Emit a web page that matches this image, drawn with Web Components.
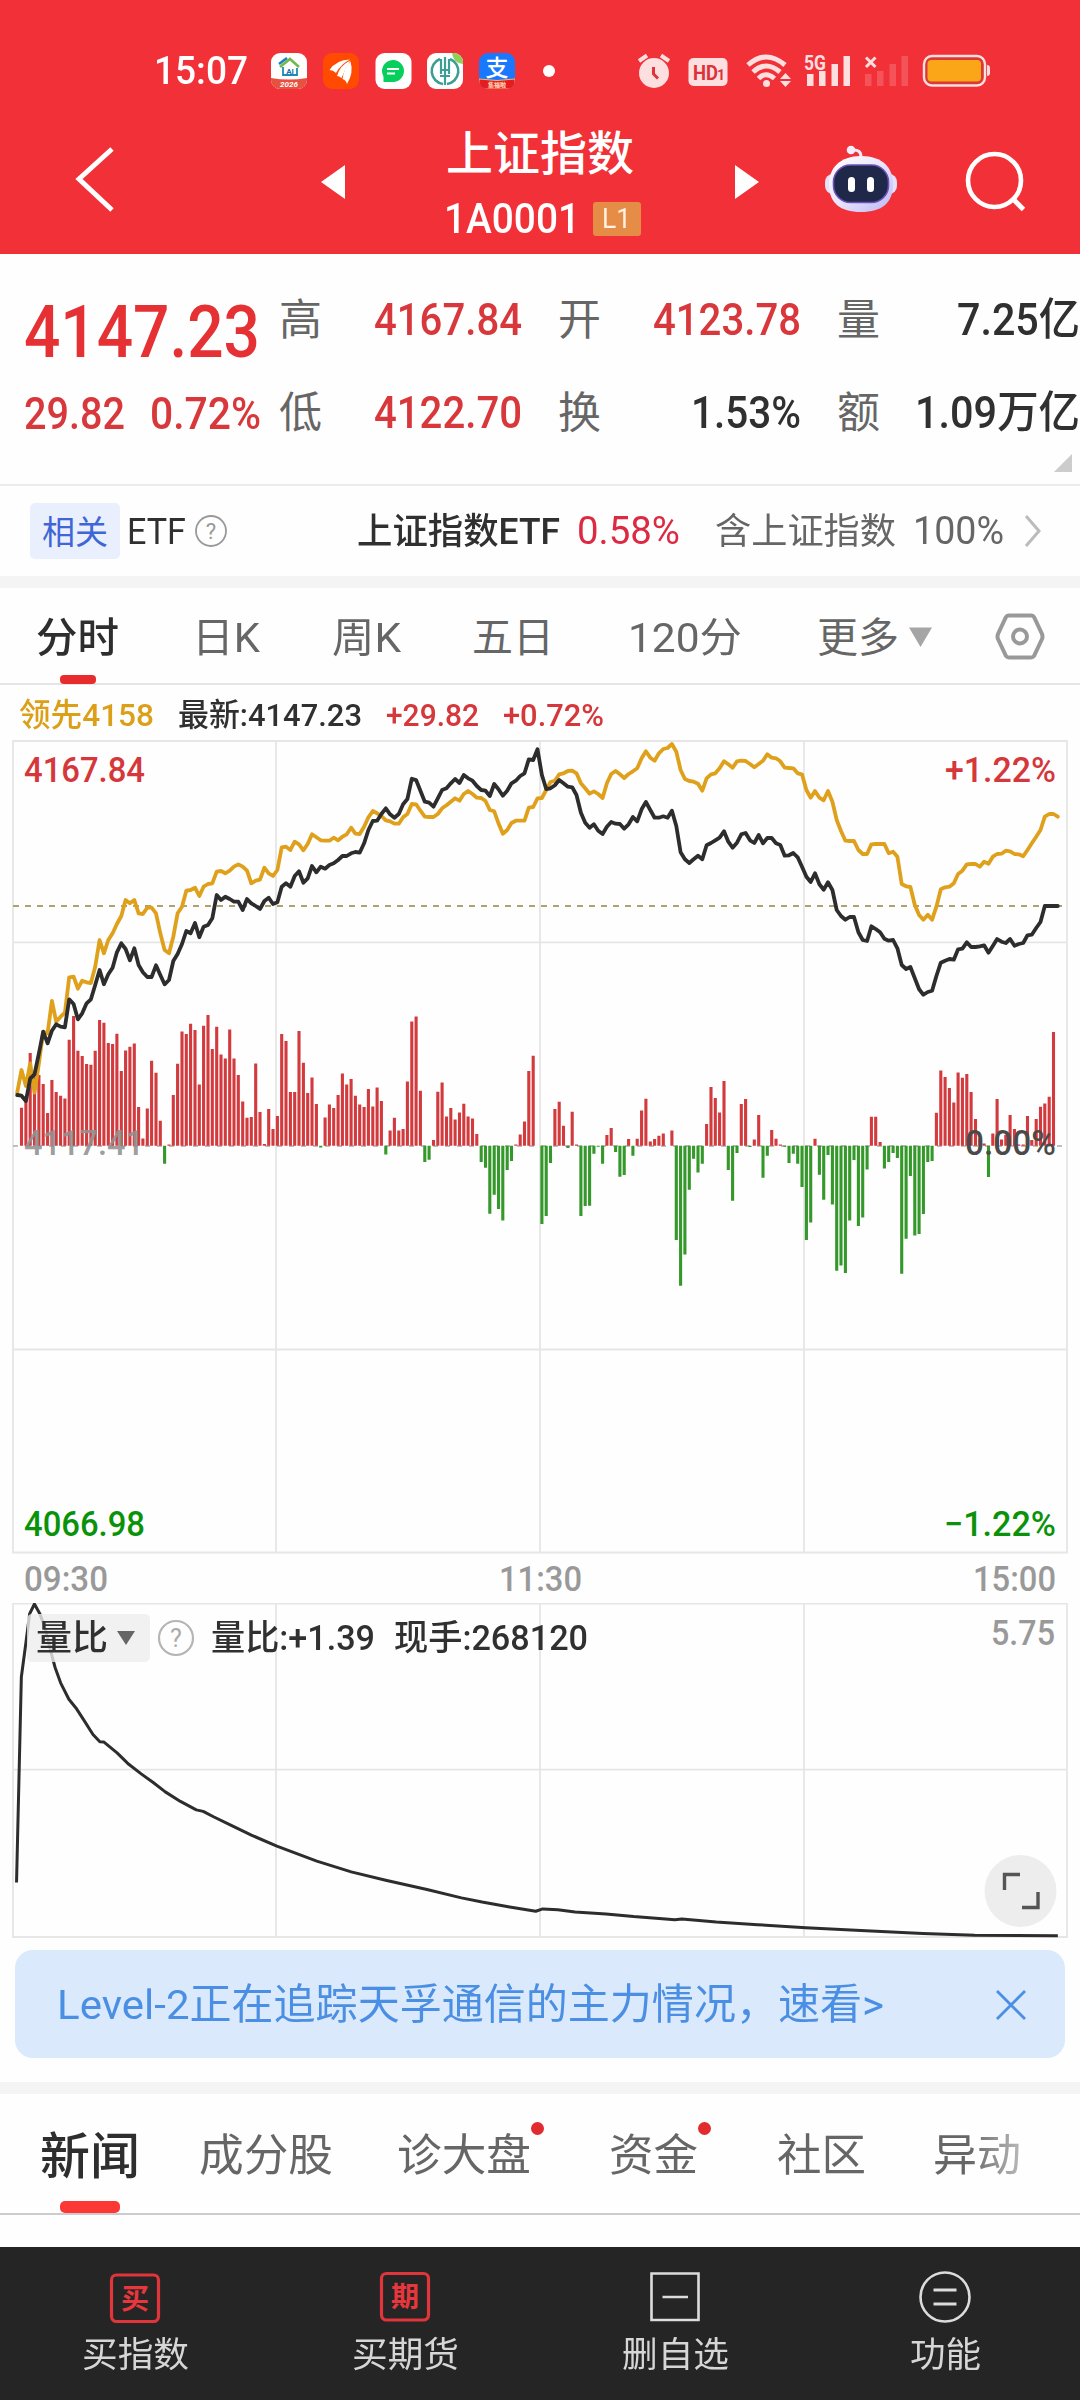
<!DOCTYPE html>
<html lang="zh-CN">
<head>
<meta charset="utf-8">
<title>上证指数</title>
<style>
  body {
    margin: 0;
    width: 1080px;
    height: 2400px;
    overflow: hidden;
    background: #fefefe;
    font-family: Roboto, "Noto Sans CJK SC", sans-serif;
  }
</style>
</head>
<body>
<stock-app></stock-app>

<script>
/* One line of text squeezed to a given width */
class FitText extends HTMLElement {
  constructor() {
    super();
    this.attachShadow({ mode: "open" });
  }

  static get styles() {
    return `
      :host {
        display: block;
        flex: none;
        line-height: 1;
        white-space: nowrap;
      }

      span {
        display: inline-block;
        vertical-align: top;
        transform-origin: 0 0;
      }
    `;
  }

  connectedCallback() {
    this.shadowRoot.innerHTML = `
    <style>${FitText.styles}</style>
    <span><slot></slot></span>
    `;
    const width = Number(this.getAttribute("w"));
    const span = this.shadowRoot.querySelector("span");
    this.style.height = "1em";
    span.style.transform = `scaleX(${width / span.getBoundingClientRect().width})`;
    this.style.width = `${width}px`;
  }
}

customElements.define("fit-text", FitText);

class StatusBar extends HTMLElement {
  constructor() {
    super();
    this.attachShadow({ mode: "open" });
  }

  static get styles() {
    return `
      :host {
        display: flex;
        height: 110px;
        box-sizing: border-box;
        padding: 40px 0 0 154px;
        color: #fff;
      }

      fit-text {
        margin: 12px 12px 0 0;
        font-size: 38px;
        font-weight: 500;
      }

      .apps {
        margin-right: 60px;
      }
    `;
  }

  connectedCallback() {
    this.shadowRoot.innerHTML = `
    <style>${StatusBar.styles}</style>
    <fit-text w="94">15:07</fit-text>
    <svg class="apps" width="300" height="60" viewBox="260 40 300 60">
      <defs>
        <clipPath id="a"><rect x="271" y="53" width="36" height="36" rx="9"/></clipPath>
        <clipPath id="b"><rect x="479" y="53" width="36" height="36" rx="9"/></clipPath>
        <clipPath id="c"><rect x="427" y="53" width="36" height="36" rx="9"/></clipPath>
      </defs>
      <g clip-path="url(#a)">
        <rect x="271" y="53" width="36" height="36" fill="#fff"/>
        <path d="M271 78 Q289 81 307 78 V89 H271Z" fill="#e8503f"/>
        <path d="M280 67 L290 59 L299 67" fill="none" stroke="#72b94a" stroke-width="2.5"/>
        <path d="M279 64 L287 58" fill="none" stroke="#1d7fb8" stroke-width="2.5"/>
        <path d="M283 67 V75 H297 V68" fill="none" stroke="#1d8ab0" stroke-width="1.8"/>
        <text x="290" y="73.500" text-anchor="middle" font-size="8" font-weight="700" fill="#1d6fb0">AI</text>
        <text x="289" y="87" text-anchor="middle" font-size="8" font-style="italic" font-weight="700" fill="#fff">2026</text>
      </g>
      <rect x="323" y="53" width="36" height="36" rx="9" fill="#ff4a00"/>
      <g fill="#fff">
        <path d="M329.500 70 Q336 60 350 59.500 Q341 64 336 73 Q333 70 329.500 70Z"/>
        <path d="M337 76 Q340 65 350.500 60.500 Q345 69 341.500 78 Q339 76 337 76Z"/>
        <path d="M342.500 79 Q344 68 350.500 61.500 Q354 73 347 84 Q346 80 342.500 79Z"/>
      </g>
      <rect x="375.500" y="53" width="36" height="36" rx="9" fill="#fff"/>
      <path d="M383.500 82 V76.500 A11 11 0 1 1 393 82Z" fill="#06cf5c"/>
      <path d="M387 69 H399 M387 73.500 H395" stroke="#fff" stroke-width="2"/>
      <g clip-path="url(#c)">
        <rect x="427" y="53" width="36" height="36" fill="#fff"/>
        <path d="M452 53 H463 V64 Q453 63 452 53Z" fill="#8ed05b"/>
        <path d="M440 59 A13 13 0 0 0 443 84 M450 59 A13 13 0 0 1 447 84" fill="none" stroke="#3c9f93" stroke-width="2.600"/>
        <path d="M445 57 V85 M441 59 V74 M449 59 V74 M440 70 H450 M440 76 H450" stroke="#3c9f93" stroke-width="2.200"/>
      </g>
      <g clip-path="url(#b)">
        <rect x="479" y="53" width="36" height="36" fill="#1a78ff"/>
        <text x="497" y="76" text-anchor="middle" font-size="23" font-weight="500" fill="#fff">支</text>
        <path d="M479 79 Q497 82 515 79 V89 H479Z" fill="#e81c1c" stroke="#ffb46b"/>
        <text x="497" y="87" text-anchor="middle" font-size="6" font-weight="700" fill="#ffe3c8">集福啦</text>
      </g>
      <circle cx="549" cy="71" r="6" fill="#fff"/>
    </svg>
    <svg width="400" height="60" viewBox="620 40 400 60" fill="#fddfe0">
      <circle cx="654" cy="73" r="15"/>
      <path d="M639 61 L647 55.500 M661 55.500 L669 61" stroke="#fddfe0" stroke-width="4"/>
      <path d="M653.500 67 V74 L658 78.500" fill="none" stroke="#e0333a" stroke-width="3"/>
      <rect x="688.500" y="58" width="39" height="28" rx="5"/>
      <text x="693" y="80" font-size="21" font-weight="700" fill="#dc333a" textLength="25" lengthAdjust="spacingAndGlyphs">HD</text>
      <text x="717" y="80" font-size="14" font-weight="700" fill="#dc333a">1</text>
      <g fill="none" stroke="#fddfe0" stroke-width="5">
        <path d="M748 65 Q766 49 785 65"/>
        <path d="M753 72 Q766 60 780 72"/>
        <path d="M758.500 78.500 Q766 71 774.500 78.500"/>
      </g>
      <circle cx="766.500" cy="83.500" r="3.500"/>
      <path d="M785.500 73 L791 79 H780Z M785.500 87 L791 81 H780Z"/>
      <text x="804" y="69.500" font-size="20.500" font-weight="700" textLength="22" lengthAdjust="spacingAndGlyphs">5G</text>
      <path d="M807 74 h6.500 v12 h-6.500z M819 71 h6.500 v15 h-6.500z M831.500 64 h6.500 v22 h-6.500z M843.500 56 h6.500 v30 h-6.500z"/>
      <path d="M866 57.500 L875.500 67 M875.500 57.500 L866 67" stroke="#fddfe0" stroke-width="3"/>
      <path opacity=".2" d="M865 74 h6.500 v12 h-6.500z M877 71 h6.500 v15 h-6.500z M889.500 64 h6.500 v22 h-6.500z M901.500 56 h6.500 v30 h-6.500z"/>
      <rect x="924" y="56" width="61" height="29.500" rx="8" fill="#d93a34" stroke="#fddfe0" stroke-width="2.400"/>
      <rect x="927.500" y="60" width="53.500" height="21.500" rx="4" fill="#fba518"/>
      <path d="M987 65 Q990 65 990 68 V73 Q990 76 987 76Z"/>
    </svg>
    `;
  }
}

customElements.define("status-bar", StatusBar);

class TitleBar extends HTMLElement {
  constructor() {
    super();
    this.attachShadow({ mode: "open" });
  }

  static get styles() {
    return `
      :host {
        display: flex;
        height: 144px;
        align-items: flex-start;
        color: #fff;
      }

      svg {
        flex: none;
      }

      .title {
        width: 390px;
        display: flex;
        flex-direction: column;
        align-items: center;
        padding-top: 20px;
      }

      .name {
        font-size: 47px;
        font-weight: 500;
      }

      .code {
        display: flex;
        align-items: center;
        gap: 13px;
        margin-top: 21px;
        padding-left: 4px;
        font-size: 42px;
        font-weight: 500;
      }

      .level {
        display: flex;
        align-items: center;
        justify-content: center;
        width: 48px;
        height: 34px;
        border-radius: 3px;
        background: #e58c47;
        font-size: 27px;
        font-weight: 400;
        color: #fff2e2;
      }
    `;
  }

  connectedCallback() {
    this.shadowRoot.innerHTML = `
    <style>${TitleBar.styles}</style>
    <svg width="345" height="144" viewBox="0 110 345 144">
      <path d="M112 149 L79 179 L112 210" fill="none" stroke="#fff" stroke-width="5"/>
      <path d="M345 165 V199 L321 182Z" fill="#fff"/>
    </svg>
    <div class="title">
      <fit-text class="name" w="188">上证指数</fit-text>
      <div class="code">
        <fit-text w="136">1A0001</fit-text>
        <div class="level"><fit-text w="29">L1</fit-text></div>
      </div>
    </div>
    <svg width="345" height="144" viewBox="735 110 345 144">
      <defs>
        <linearGradient id="shell" x1="0" y1="0" x2="1" y2="1">
          <stop offset="0" stop-color="#fff"/>
          <stop offset=".5" stop-color="#e9e5fb"/>
          <stop offset="1" stop-color="#b9b5f5"/>
        </linearGradient>
      </defs>
      <path d="M735 165 V199 L759 182Z" fill="#fff"/>
      <path d="M861 157 Q861 149 852 150" fill="none" stroke="#efe9f8" stroke-width="3"/>
      <circle cx="851" cy="150" r="4.300" fill="#f3eef9"/>
      <rect x="825" y="174" width="72" height="20" rx="8" fill="#e6e0fa"/>
      <path d="M861 156 C883 156 893 168 893 184 C893 203 882 212 861 212 C840 212 829 203 829 184 C829 168 840 156 861 156Z" fill="url(#shell)"/>
      <rect x="833.500" y="165" width="55" height="37.500" rx="17" fill="#1f2848" stroke="#6b51b8" stroke-width="1.600"/>
      <rect x="848" y="177" width="7" height="15" rx="3.500" fill="#fff"/>
      <rect x="867" y="177" width="7" height="15" rx="3.500" fill="#fff"/>
      <circle cx="994.500" cy="180.500" r="26.500" fill="none" stroke="#fff" stroke-width="4.600"/>
      <path d="M1012 198 L1023.500 209.500" stroke="#fff" stroke-width="5"/>
    </svg>
    `;
  }
}

customElements.define("title-bar", TitleBar);

class QuotePanel extends HTMLElement {
  constructor() {
    super();
    this.attachShadow({ mode: "open" });
  }

  static get styles() {
    return `
      :host {
        display: flex;
        height: 232px;
        box-sizing: border-box;
        position: relative;
        border-bottom: 2px solid #ebebeb;
        color: #303030;
        font-size: 44px;
        font-weight: 500;
      }

      .price {
        width: 256px;
        padding: 42px 0 0 24px;
        color: #e53034;
      }

      .last {
        font-size: 73px;
        margin-bottom: 23px;
      }

      .change {
        display: flex;
        justify-content: space-between;
        width: 237px;
        color: #d8383b;
      }

      dl {
        display: grid;
        grid-template-columns: repeat(3, 243px);
        grid-auto-rows: 44px;
        gap: 49px 36px;
        margin: 44px 0 0 1px;
      }

      dl div {
        display: flex;
        justify-content: space-between;
        align-items: center;
      }

      dt {
        color: #666;
        font-size: 43px;
        font-weight: 400;
      }

      dd {
        margin: 0;
      }

      .up {
        color: #d8383b;
      }

      .corner {
        position: absolute;
        right: 8px;
        bottom: 12px;
        width: 18px;
        height: 18px;
        background: #ccc;
        clip-path: polygon(100% 0, 100% 100%, 0 100%);
      }
    `;
  }

  connectedCallback() {
    const cells = [
      ["高", "4167.84", 148, "up"], ["开", "4123.78", 148, "up"], ["量", "7.25亿", 123, ""],
      ["低", "4122.70", 148, "up"], ["换", "1.53%", 110, ""], ["额", "1.09万亿", 165, ""],
    ];
    this.shadowRoot.innerHTML = `
    <style>${QuotePanel.styles}</style>
    <div class="price">
      <fit-text class="last" w="236">4147.23</fit-text>
      <div class="change"><fit-text w="101">29.82</fit-text><fit-text w="111">0.72%</fit-text></div>
    </div>
    <dl>${cells.map(([name, value, width, cls]) => `
      <div><dt><fit-text w="43">${name}</fit-text></dt><dd class="${cls}"><fit-text w="${width}">${value}</fit-text></dd></div>`).join("")}
    </dl>
    <span class="corner"></span>
    `;
  }
}

customElements.define("quote-panel", QuotePanel);

class EtfRow extends HTMLElement {
  constructor() {
    super();
    this.attachShadow({ mode: "open" });
  }

  static get styles() {
    return `
      :host {
        display: flex;
        height: 102px;
        box-sizing: border-box;
        align-items: center;
        padding-left: 30px;
        border-bottom: 12px solid #f4f4f4;
        color: #303030;
        font-size: 36px;
      }

      .tag {
        display: flex;
        align-items: center;
        justify-content: center;
        width: 90px;
        height: 56px;
        margin-right: 7px;
        border-radius: 5px;
        background: #e9effd;
        color: #3f66d6;
        font-size: 33px;
      }

      .tag fit-text {
        padding-top: 2px;
      }

      .cjk {
        padding-top: 2px;
      }

      .help {
        margin: 0 129px 0 8px;
      }

      .pct {
        margin: 0 35px 0 17px;
        color: #dc2a42;
        font-size: 39px;
      }

      .dim {
        color: #666;
      }

      .share {
        margin: 0 18px 0 17px;
        font-size: 38px;
      }
    `;
  }

  connectedCallback() {
    this.shadowRoot.innerHTML = `
    <style>${EtfRow.styles}</style>
    <div class="tag"><fit-text w="66">相关</fit-text></div>
    <fit-text class="cjk" w="59">ETF</fit-text>
    <svg class="help" width="34" height="34" viewBox="0 0 34 34">
      <circle cx="17" cy="17" r="15" fill="none" stroke="#999" stroke-width="1.800"/>
      <text x="17" y="25" text-anchor="middle" font-size="22" fill="#999">?</text>
    </svg>
    <fit-text class="cjk" w="203" style="font-weight:500">上证指数ETF</fit-text>
    <fit-text class="pct" w="103">0.58%</fit-text>
    <fit-text class="dim cjk" w="181">含上证指数</fit-text>
    <fit-text class="dim share" w="91">100%</fit-text>
    <svg width="22" height="36" viewBox="0 0 22 36"><path d="M4 3 L17 18 L4 33" fill="none" stroke="#bbb" stroke-width="3"/></svg>
    `;
  }
}

customElements.define("etf-row", EtfRow);

class PeriodTabs extends HTMLElement {
  constructor() {
    super();
    this.attachShadow({ mode: "open" });
  }

  static get styles() {
    return `
      :host {
        display: flex;
        height: 97px;
        box-sizing: border-box;
        align-items: center;
        position: relative;
        padding-left: 36px;
        border-bottom: 2px solid #e5e5e5;
        color: #666;
        font-size: 41px;
      }

      fit-text {
        padding-top: 5px;
      }

      .active {
        color: #2e2e2e;
        font-weight: 500;
      }

      .mark {
        position: absolute;
        left: 60px;
        bottom: -1px;
        width: 36px;
        height: 9px;
        border-radius: 4px;
        background: #e82c2e;
      }

      svg {
        flex: none;
      }
    `;
  }

  connectedCallback() {
    this.shadowRoot.innerHTML = `
    <style>${PeriodTabs.styles}</style>
    <fit-text class="active" w="83">分时</fit-text>
    <fit-text w="68" style="margin-left:73px">日K</fit-text>
    <fit-text w="69" style="margin-left:72px">周K</fit-text>
    <fit-text w="82" style="margin-left:71px">五日</fit-text>
    <fit-text w="114" style="margin-left:74px">120分</fit-text>
    <fit-text w="82" style="margin-left:75px">更多</fit-text>
    <svg width="180" height="94" viewBox="899 588 180 94">
      <path d="M909 626.500 H932 L920.500 646Z" fill="#a5a5a5"/>
      <path d="M1009 614.500 H1031 Q1033 614.500 1034 616 L1042 633 Q1043 636 1042 638 L1034 655 Q1033 656.500 1031 656.500 H1009 Q1007 656.500 1006 655 L998 638 Q997 636 998 633 L1006 616 Q1007 614.500 1009 614.500Z" fill="none" stroke="#999" stroke-width="4"/>
      <circle cx="1020" cy="635.500" r="7" fill="none" stroke="#999" stroke-width="4"/>
    </svg>
    <span class="mark"></span>
    `;
  }
}

customElements.define("period-tabs", PeriodTabs);

// Curves are sampled once a minute, y in thirds of a pixel below y = 720
const PRICE = [
  1125, 1127, 1143, 1076, 1063, 1000, 935, 970, 932, 913, 920, 922, 838, 852, 898, 880, 850, 838, 795, 750,
  793, 763, 743, 697, 670, 687, 721, 685, 735, 757, 771, 771, 736, 765, 793, 780, 723, 702, 672, 633,
  640, 609, 652, 620, 615, 595, 525, 540, 530, 537, 545, 545, 570, 537, 550, 558, 567, 543, 533, 552,
  547, 500, 490, 500, 468, 454, 488, 475, 438, 457, 440, 446, 435, 430, 420, 408, 408, 400, 396, 398,
  370, 330, 303, 302, 282, 265, 283, 293, 282, 253, 237, 176, 180, 212, 245, 248, 260, 235, 210, 205,
  190, 177, 189, 165, 175, 182, 198, 210, 212, 228, 192, 208, 227, 212, 190, 182, 168, 160, 118, 120,
  88, 165, 207, 205, 196, 180, 190, 200, 202, 225, 278, 308, 323, 313, 332, 342, 320, 306, 311, 312,
  326, 313, 291, 304, 268, 246, 270, 293, 293, 289, 293, 272, 318, 397, 418, 429, 418, 407, 418, 376,
  369, 361, 353, 334, 365, 383, 368, 343, 339, 361, 369, 345, 370, 354, 354, 370, 375, 407, 406, 399,
  412, 440, 470, 486, 460, 493, 509, 487, 510, 570, 588, 599, 591, 591, 637, 660, 663, 619, 627, 637,
  656, 662, 660, 685, 735, 747, 741, 775, 808, 824, 816, 812, 768, 728, 722, 717, 719, 688, 686, 667,
  681, 681, 679, 676, 698, 678, 657, 665, 669, 657, 677, 672, 669, 646, 644, 624, 606, 558, 558, 558, 558,
];

const LEAD = [
  1118, 1050, 1098, 1030, 1118, 1030, 935, 940, 843, 905, 890, 878, 772, 770, 806, 782, 787, 789, 740, 660,
  700, 660, 640, 612, 588, 540, 550, 540, 580, 582, 563, 563, 580, 640, 690, 700, 650, 580, 560, 512,
  510, 503, 528, 500, 492, 490, 455, 453, 460, 452, 440, 433, 440, 452, 490, 482, 479, 443, 460, 468,
  450, 382, 380, 390, 365, 373, 391, 372, 343, 352, 361, 362, 362, 353, 361, 350, 343, 323, 341, 342,
  320, 292, 273, 280, 288, 301, 304, 311, 311, 292, 282, 252, 253, 272, 290, 291, 291, 282, 265, 256,
  245, 235, 242, 222, 213, 222, 233, 234, 243, 270, 274, 310, 341, 330, 309, 302, 302, 302, 263, 261,
  235, 234, 210, 186, 182, 163, 160, 153, 152, 160, 190, 205, 221, 214, 222, 234, 190, 162, 153, 163,
  174, 162, 154, 145, 115, 94, 113, 122, 100, 87, 84, 72, 95, 150, 177, 183, 185, 191, 212, 175,
  163, 160, 145, 124, 133, 143, 124, 122, 123, 132, 142, 132, 122, 103, 113, 115, 124, 143, 144, 145,
  160, 163, 210, 233, 213, 233, 241, 213, 245, 300, 333, 362, 363, 363, 390, 402, 402, 373, 372, 372,
  372, 400, 395, 410, 492, 499, 501, 555, 585, 599, 584, 599, 560, 508, 502, 500, 490, 462, 452, 433,
  432, 432, 440, 425, 431, 410, 402, 401, 392, 394, 402, 403, 409, 390, 370, 350, 330, 290, 282, 282, 290,
];

// Bar ends from minute 1 on, same thirds; the zero line is at 437
const BARS = [
  323, 300, 159, 225, 225, 252, 339, 240, 276, 287, 295, 119, 48, 152, 168, 192, 194, 152, 60, 68,
  129, 132, 101, 213, 151, 140, 130, 321, 415, 325, 182, 218, 362, 491, 433, 285, 191, 94, 102, 71,
  90, 253, 77, 45, 147, 80, 163, 175, 88, 175, 225, 304, 353, 351, 190, 336, 432, 327, 387, 348,
  102, 123, 276, 276, 93, 188, 279, 232, 312, 442, 352, 313, 324, 285, 220, 253, 237, 287, 313, 321,
  267, 319, 262, 303, 463, 391, 353, 391, 387, 244, 64, 49, 272, 486, 479, 420, 275, 247, 349, 324,
  358, 337, 311, 349, 355, 402, 486, 503, 641, 584, 627, 661, 510, 483, 433, 403, 364, 213, 167, 437,
  672, 648, 489, 327, 305, 377, 444, 335, 433, 648, 618, 617, 461, 440, 491, 405, 384, 456, 530, 525,
  417, 467, 416, 331, 296, 424, 417, 407, 400, 437, 391, 720, 857, 763, 569, 476, 517, 491, 372, 261,
  294, 337, 243, 510, 602, 459, 312, 297, 441, 418, 345, 533, 467, 390, 416, 433, 440, 489, 461, 491,
  561, 720, 667, 416, 524, 599, 465, 613, 812, 796, 819, 661, 480, 678, 652, 508, 350, 350, 426, 505,
  486, 459, 474, 821, 716, 528, 706, 702, 642, 486, 483, 338, 211, 231, 264, 307, 217, 233, 222, 276,
  357, 415, 430, 531, 400, 297, 418, 405, 345, 387, 433, 433, 348, 420, 357, 320, 310, 290, 96,
];

const ZERO = 437;
const minuteX = (i) => 17.2 + i * 4.336;

class MinuteChart extends HTMLElement {
  constructor() {
    super();
    this.attachShadow({ mode: "open" });
  }

  static get styles() {
    return `
      :host {
        display: block;
        height: 918px;
        font-weight: 500;
      }

      .legend {
        display: flex;
        align-items: center;
        height: 55px;
        padding-left: 19px;
        box-sizing: border-box;
        padding-top: 5px;
        font-size: 32px;
        color: #303030;
      }

      .lead {
        color: #dc9f18;
        margin-right: 24px;
      }

      .up {
        color: #d5373b;
        margin-left: 24px;
      }

      svg {
        display: block;
      }

      .grid {
        fill: none;
        stroke: #e6e6e6;
        stroke-width: 1.800;
      }

      .line {
        fill: none;
        stroke-width: 3.800;
        stroke-linejoin: round;
        stroke-linecap: round;
      }

      text {
        font-size: 34.500px;
      }

      .time {
        fill: #999;
      }
    `;
  }

  line(values) {
    return values.map((y, i) => `${minuteX(i).toFixed(1)},${(720 + y / 3).toFixed(1)}`).join(" ");
  }

  bars(up) {
    return BARS.map((v, i) => {
      const d = (v - ZERO) / 3;
      return (d < 0) === up && d !== 0 ? `M${minuteX(i + 1).toFixed(1)} 1145.700 v${d.toFixed(1)}` : "";
    }).join("");
  }

  label(x, y, width, color, text, cls = "") {
    return `<text class="${cls}" x="${x}" y="${y}" fill="${color}" textLength="${width}" lengthAdjust="spacingAndGlyphs">${text}</text>`;
  }

  connectedCallback() {
    this.shadowRoot.innerHTML = `
    <style>${MinuteChart.styles}</style>
    <div class="legend">
      <fit-text class="lead" w="135">领先4158</fit-text>
      <fit-text w="184">最新:4147.23</fit-text>
      <fit-text class="up" w="93">+29.82</fit-text>
      <fit-text class="up" w="101">+0.72%</fit-text>
    </div>
    <svg width="1080" height="863" viewBox="0 740 1080 863">
      <path class="grid" d="M13 741 H1067 V1552.500 H13Z M13 942.300 H1067 M13 1349.500 H1067 M276 740 V1552 M540 740 V1552 M804 740 V1552"/>
      <path d="M13 1146 H1062" stroke="#aaa" stroke-width="1.700" stroke-dasharray="5 7"/>
      <path d="M13 906 H1062" stroke="#ada36b" stroke-width="1.800" stroke-dasharray="6 6"/>
      <path d="${this.bars(true)}" stroke="#d23a3d" stroke-width="3.100"/>
      <path d="${this.bars(false)}" stroke="#35982a" stroke-width="3.100"/>
      <polyline class="line" stroke="#dfa01c" points="${this.line(LEAD)}"/>
      <polyline class="line" stroke="#2d2d2d" points="${this.line(PRICE)}"/>
      ${this.label(24, 782, 121, "#d5373b", "4167.84")}
      ${this.label(945, 782, 111, "#d5373b", "+1.22%")}
      ${this.label(24, 1155, 120, "rgba(145,145,145,.9)", "4117.41")}
      ${this.label(965, 1155, 91, "#4a4a4a", "0.00%")}
      ${this.label(24, 1536, 121, "#0a930a", "4066.98")}
      ${this.label(944, 1536, 112, "#0a930a", "−1.22%")}
      ${this.label(24, 1591, 84, "#999", "09:30", "time")}
      ${this.label(499, 1591, 83, "#999", "11:30", "time")}
      ${this.label(973, 1591, 83, "#999", "15:00", "time")}
    </svg>
    `;
  }
}

customElements.define("minute-chart", MinuteChart);

class RatioChart extends HTMLElement {
  constructor() {
    super();
    this.attachShadow({ mode: "open" });
  }

  static get styles() {
    return `
      :host {
        display: block;
        position: relative;
        height: 347px;
      }

      svg {
        display: block;
      }

      .info {
        position: absolute;
        top: 11px;
        left: 27px;
        display: flex;
        align-items: center;
        color: #303030;
        font-size: 35.500px;
        font-weight: 500;
      }

      .info fit-text {
        padding-top: 2px;
      }

      .pill {
        display: flex;
        align-items: center;
        gap: 8px;
        width: 123px;
        height: 48px;
        box-sizing: border-box;
        padding-left: 9px;
        border-radius: 5px;
        background: rgba(238, 238, 238, .8);
      }

      .help {
        margin: 0 16px 0 7px;
      }
    `;
  }

  connectedCallback() {
    this.shadowRoot.innerHTML = `
    <style>${RatioChart.styles}</style>
    <svg width="1080" height="347" viewBox="0 1603 1080 347">
      <path d="M13 1603.500 H1067 V1937 H13Z M13 1769.700 H1067 M276 1603 V1937 M540 1603 V1937 M804 1603 V1937" fill="none" stroke="#e6e6e6" stroke-width="1.800"/>
      <g transform="translate(0 1480) scale(.68871 .38265)">
        <polyline vector-effect="non-scaling-stroke" fill="none" stroke="#2d2d2d" stroke-width="3" stroke-linejoin="round" points="24,1052 31,515 38,420 43,350 50,324 58,350 66,390 74,450 80,490 88,530 100,573 110,595 122,628 135,665 145,684 151,685 170,713 187,743 205,768 222,790 240,815 262,840 285,862 295,866 310,880 335,902 365,928 402,957 430,976 460,996 510,1024 560,1046 620,1070 670,1092 700,1103 740,1116 778,1127 788,1121 810,1123 835,1129 880,1134 920,1141 980,1149 990,1147 1040,1155 1100,1162 1170,1170 1250,1177 1340,1185 1415,1190 1536,1191"/>
      </g>
      <text x="991" y="1645" font-size="34.500" font-weight="500" fill="#999" textLength="64" lengthAdjust="spacingAndGlyphs">5.75</text>
      <circle cx="1020.500" cy="1891" r="36" fill="#ededed"/>
      <path d="M1004.500 1890 V1874.500 H1020 M1022 1907.500 H1038 V1892" fill="none" stroke="#555" stroke-width="3.400"/>
    </svg>
    <div class="info">
      <div class="pill">
        <fit-text w="72">量比</fit-text>
        <svg width="20" height="16" viewBox="0 0 20 16"><path d="M1 1 H19 L10 15Z" fill="#666"/></svg>
      </div>
      <svg class="help" width="38" height="38" viewBox="0 0 38 38">
        <circle cx="19" cy="19" r="17" fill="none" stroke="#b5b5b5" stroke-width="2.200"/>
        <text x="19" y="28" text-anchor="middle" font-size="25" font-weight="400" fill="#aaa">?</text>
      </svg>
      <fit-text w="164">量比:+1.39</fit-text>
      <fit-text w="194" style="margin-left:19px">现手:268120</fit-text>
    </div>
    `;
  }
}

customElements.define("ratio-chart", RatioChart);

class TipBanner extends HTMLElement {
  constructor() {
    super();
    this.attachShadow({ mode: "open" });
  }

  static get styles() {
    return `
      :host {
        display: flex;
        align-items: center;
        justify-content: space-between;
        height: 108px;
        box-sizing: border-box;
        margin: 0 15px 24px;
        padding: 2px 37px 0 42px;
        border-radius: 18px;
        background: #dae9fb;
        color: #4a8fe3;
        font-size: 41.500px;
      }
    `;
  }

  connectedCallback() {
    this.shadowRoot.innerHTML = `
    <style>${TipBanner.styles}</style>
    <fit-text w="827"><slot></slot></fit-text>
    <svg width="34" height="34" viewBox="0 0 34 34"><path d="M3 3 L31 31 M31 3 L3 31" stroke="#4a8fe3" stroke-width="2.800"/></svg>
    `;
  }
}

customElements.define("tip-banner", TipBanner);

class NewsTabs extends HTMLElement {
  constructor() {
    super();
    this.attachShadow({ mode: "open" });
  }

  static get styles() {
    return `
      :host {
        display: flex;
        height: 133px;
        box-sizing: border-box;
        align-items: center;
        position: relative;
        padding-left: 40px;
        border-top: 12px solid #f4f4f4;
        border-bottom: 2px solid #ccc;
        color: #666;
        font-size: 44.500px;
      }

      fit-text {
        padding-top: 6px;
      }

      .active {
        color: #2e2e2e;
        font-size: 50px;
        font-weight: 500;
      }

      .dot {
        position: relative;
      }

      .dot::after {
        position: absolute;
        top: -6px;
        right: -13px;
        content: "";
        width: 13px;
        height: 13px;
        border-radius: 50%;
        background: #e22b2e;
      }

      .fade {
        -webkit-mask-image: linear-gradient(90deg, #000 40%, rgba(0, 0, 0, .45));
        mask-image: linear-gradient(90deg, #000 40%, rgba(0, 0, 0, .45));
      }

      .mark {
        position: absolute;
        left: 60px;
        bottom: 0;
        width: 60px;
        height: 12px;
        border-radius: 5px;
        background: #fc3835;
      }
    `;
  }

  connectedCallback() {
    this.shadowRoot.innerHTML = `
    <style>${NewsTabs.styles}</style>
    <fit-text class="active" w="100">新闻</fit-text>
    <fit-text w="134" style="margin-left:59px">成分股</fit-text>
    <div class="dot" style="margin-left:64px"><fit-text w="134">诊大盘</fit-text></div>
    <div class="dot" style="margin-left:78px"><fit-text w="89">资金</fit-text></div>
    <fit-text w="89" style="margin-left:79px">社区</fit-text>
    <fit-text class="fade" w="88" style="margin-left:67px">异动</fit-text>
    <span class="mark"></span>
    `;
  }
}

customElements.define("news-tabs", NewsTabs);

class TradeNav extends HTMLElement {
  constructor() {
    super();
    this.attachShadow({ mode: "open" });
  }

  static get styles() {
    return `
      :host {
        display: grid;
        grid-template-columns: repeat(4, 1fr);
        height: 153px;
        margin-top: 32px;
        background: #252525;
        color: #d6d6d6;
        font-size: 35.500px;
      }

      div {
        display: flex;
        flex-direction: column;
        align-items: center;
        gap: 14px;
        padding-top: 23px;
      }
    `;
  }

  connectedCallback() {
    const box = (char, y) => `
      <rect x="3.500" y="${y}" width="47" height="46.500" rx="5" fill="none" stroke="#e0353a" stroke-width="3.200"/>
      <text x="27" y="${y + 33.5}" text-anchor="middle" font-size="28" font-weight="700" fill="#e8373c">${char}</text>`;
    const items = [
      ["买指数", 107, box("买", 5)],
      ["买期货", 107, box("期", 3.5)],
      ["删自选", 107, `<path d="M3.500 3.500 H50.500 V50 H3.500Z M14.500 27 H40" fill="none" stroke="#dcdcdc" stroke-width="2.600"/>`],
      ["功能", 71, `<circle cx="27" cy="27" r="24.500" fill="none" stroke="#dcdcdc" stroke-width="2.600"/><path d="M15.500 20 H38.500 M15.500 34 H38.500" stroke="#dcdcdc" stroke-width="2.800"/>`],
    ];
    this.shadowRoot.innerHTML = `
    <style>${TradeNav.styles}</style>
    ${items.map(([name, width, icon]) => `
    <div>
      <svg width="54" height="54" viewBox="0 0 54 54">${icon}</svg>
      <fit-text w="${width}">${name}</fit-text>
    </div>`).join("")}
    `;
  }
}

customElements.define("trade-nav", TradeNav);

class StockApp extends HTMLElement {
  constructor() {
    super();
    this.attachShadow({ mode: "open" });
  }

  static get styles() {
    return `
      :host {
        display: block;
      }

      header {
        height: 254px;
        background: #f23037;
      }
    `;
  }

  connectedCallback() {
    this.shadowRoot.innerHTML = `
    <style>${StockApp.styles}</style>
    <header>
      <status-bar></status-bar>
      <title-bar></title-bar>
    </header>
    <quote-panel></quote-panel>
    <etf-row></etf-row>
    <period-tabs></period-tabs>
    <minute-chart></minute-chart>
    <ratio-chart></ratio-chart>
    <tip-banner>Level-2正在追踪天孚通信的主力情况，速看&gt;</tip-banner>
    <news-tabs></news-tabs>
    <trade-nav></trade-nav>
    `;
  }
}

customElements.define("stock-app", StockApp);
</script>
</body>
</html>
